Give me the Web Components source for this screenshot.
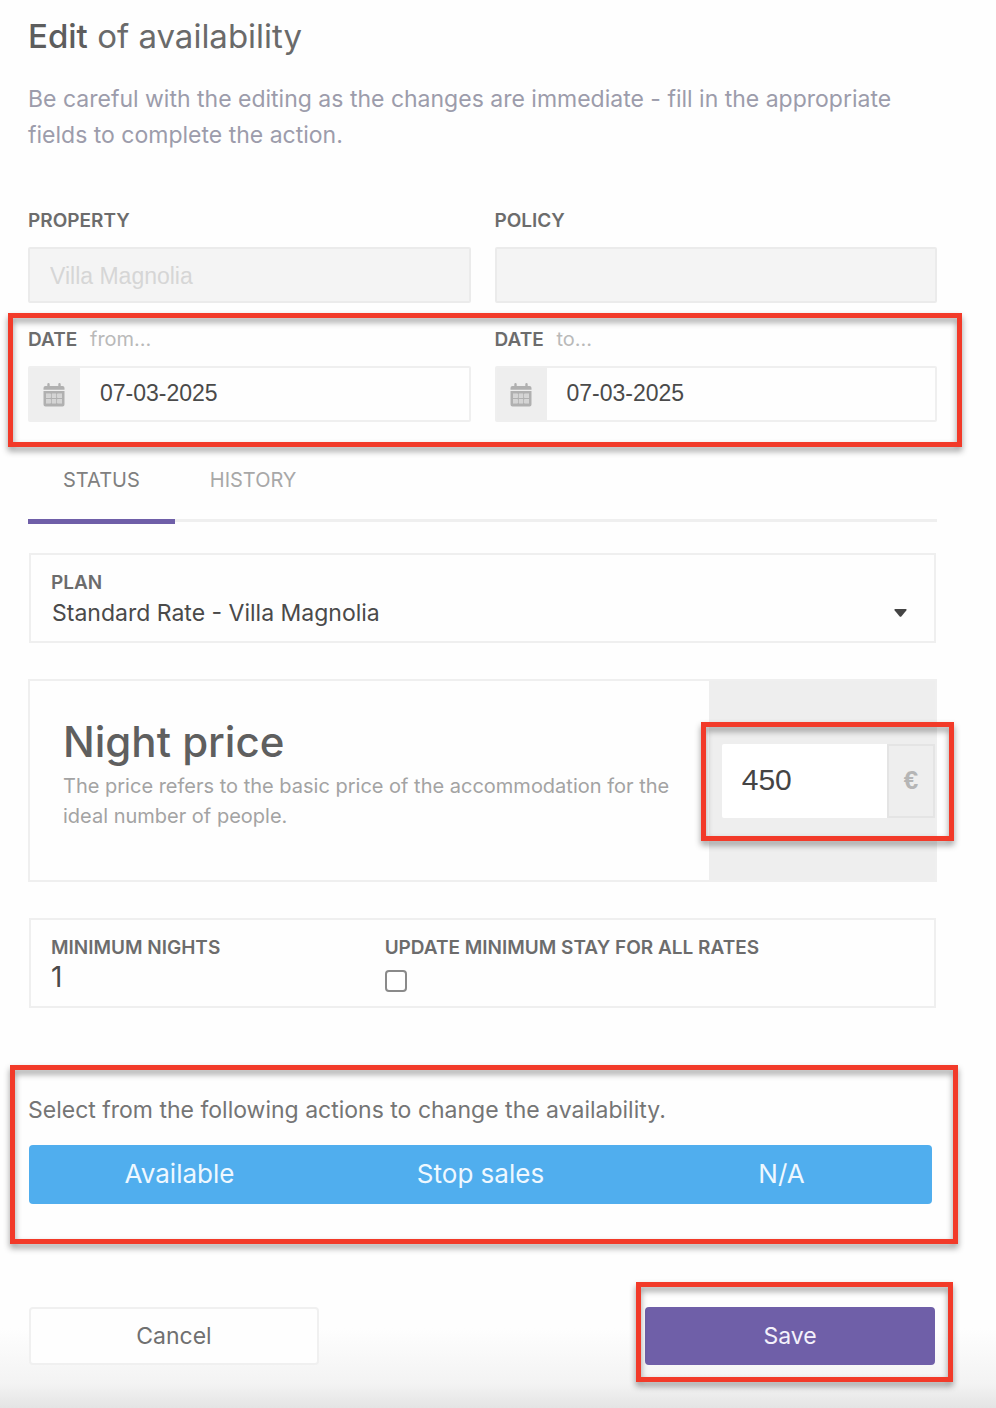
<!DOCTYPE html>
<html lang="en">
<head>
<meta charset="utf-8">
<meta name="viewport" content="width=device-width, initial-scale=1">
<title>Edit of availability</title>
<style>
  :root {
    --ink: #5f5f5f;
    --ink-strong: #4a4a4a;
    --line: #efefef;
    --fill: #eeeeee;
    --purple: #6f5fa8;
    --blue: #50aeee;
    --frame: #f23a29;
    --sans: Inter, "Liberation Sans", sans-serif;
    --arial: "Liberation Sans", Arial, sans-serif;
  }
  body { margin: 0; background: #fefefe; font-family: var(--sans); color: var(--ink); }
</style>
</head>
<body>
<availability-editor></availability-editor>

<script>
const define = (name, html, setup) => {
  const template = document.createElement('template');
  template.innerHTML = '<style>*{box-sizing:border-box}:host{display:block;box-sizing:border-box}</style>' + html;
  customElements.define(name, class extends HTMLElement {
    constructor() {
      super();
      this.attachShadow({ mode: 'open' }).append(template.content.cloneNode(true));
    }
    connectedCallback() {
      if (setup && !this.ready) setup(this, this.shadowRoot);
      this.ready = true;
    }
  });
};

const labelCss = 'label{display:block;font-size:19px;line-height:24px;font-weight:600;color:#6c6c6c}';

/* Red callout drawn over the slotted content */
define('callout-frame', `
<style>
  :host { position: relative; }
  .ring {
    position: absolute; pointer-events: none;
    top: var(--t, -20px); right: var(--r, -20px); bottom: var(--b, -20px); left: var(--l, -20px);
    border: 5px solid var(--frame);
    filter: drop-shadow(0 4px 3px rgba(0, 0, 0, .4));
  }
</style>
<slot></slot><div class="ring"></div>`);

define('text-field', `
<style>
  ${labelCss}
  input {
    display: block; width: 100%; height: 56px; margin-top: 14px; padding: 2px 20px 0;
    border: 2px solid #ebebeb; border-radius: 2px; background: #f4f4f4;
    font: 23px var(--arial); color: #d6d6d6; opacity: 1;
  }
</style>
<label for="f"></label><input id="f" type="text" disabled>`,
(host, root) => {
  root.querySelector('label').textContent = host.getAttribute('label');
  root.querySelector('input').value = host.getAttribute('value') || '';
});

define('date-field', `
<style>
  ${labelCss}
  label b { font-weight: 600; }
  label span { margin-left: 8px; font-size: 20px; font-weight: 400; color: #b9b9b9; }
  .box { display: flex; height: 56px; margin-top: 14px; border: 2px solid var(--line); border-radius: 2px; background: #fefefe; }
  .icon { flex: none; width: 50px; display: grid; place-items: center; padding: 2px 2px 0 0; background: var(--fill); }
  svg { display: block; }
  input { flex: 1; min-width: 0; border: 0; padding: 0 20px 2px; background: none; font: 23px var(--arial); color: var(--ink-strong); outline: 0; }
</style>
<label for="d"><b></b> <span></span></label>
<div class="box">
  <div class="icon">
    <svg width="22" height="24" viewBox="0 0 22 24" aria-hidden="true">
      <path fill="#b0b0b0" d="M5.500 0a1.200 1.200 0 0 1 1.200 1.200V3h8.600V1.200a1.200 1.200 0 0 1 2.400 0V3h1.800a2 2 0 0 1 2 2v1.800H.5V5a2 2 0 0 1 2-2h1.800V1.200A1.200 1.200 0 0 1 5.500 0z"/>
      <path fill="#b0b0b0" fill-rule="evenodd" d="M.5 8h21v13.500a2 2 0 0 1-2 2h-17a2 2 0 0 1-2-2zM3 10.700v4h4.600v-4zM8.900 10.700v4h4.200v-4zM14.400 10.700v4H19v-4zM3 16.200v4h4.600v-4zM8.900 16.200v4h4.200v-4zM14.400 16.200v4H19v-4z"/>
      <path fill="#d4d4d4" d="M3 10.700h4.600v4H3zM8.900 10.700h4.200v4H8.900zM14.400 10.700H19v4h-4.600zM3 16.200h4.600v4H3zM8.900 16.200h4.200v4H8.900zM14.400 16.200H19v4h-4.600z"/>
    </svg>
  </div>
  <input id="d" type="text">
</div>`,
(host, root) => {
  root.querySelector('b').textContent = host.getAttribute('label');
  root.querySelector('span').textContent = host.getAttribute('hint');
  root.querySelector('input').value = host.getAttribute('value');
});

define('tab-strip', `
<style>
  div { display: flex; border-bottom: 3px solid var(--line); }
  button {
    appearance: none; border: 0; border-bottom: 5px solid transparent; background: none;
    margin: 0 0 -5px; padding: 24px 35px 27px; font: 20px/24px var(--sans); color: #a8a8a8;
  }
  button[aria-selected="true"] { color: #808080; border-color: var(--purple); }
</style>
<div role="tablist">
  <button role="tab" aria-selected="true">STATUS</button>
  <button role="tab" aria-selected="false">HISTORY</button>
</div>`);

define('plan-select', `
<style>
  ${labelCss}
  :host { border: 2px solid var(--line); padding: 16px 20px 10px; }
  .pick { display: grid; align-items: center; }
  select, svg { grid-area: 1 / 1; }
  select { appearance: none; width: 100%; height: 36px; padding: 0 40px 0 1px; border: 0; background: none; font: 23px var(--sans); color: var(--ink-strong); }
  svg { justify-self: end; margin-right: 7px; pointer-events: none; }
</style>
<label for="p">PLAN</label>
<div class="pick">
  <select id="p"><option>Standard Rate - Villa Magnolia</option></select>
  <svg width="13" height="8" viewBox="0 0 13 8" aria-hidden="true"><path fill="#444" d="M1 0h11q1 .5.300 1.500L7.500 7.200q-1 1-2 0L.7 1.500Q0 .5 1 0z"/></svg>
</div>`);

define('price-card', `
<style>
  :host { display: grid; grid-template-columns: minmax(0, 3fr) minmax(0, 1fr); min-height: 203px; border: 2px solid var(--line); }
  .copy { padding: 36px 20px 36px 33px; }
  h2 { margin: 0; font-size: 42px; line-height: 50px; font-weight: 500; }
  p { margin: 4px 0 0; font-size: 20px; line-height: 30px; color: #a3a3a3; }
  .side { display: grid; grid-template-columns: minmax(0, 1fr); align-items: center; padding: 0 0 0 13px; background: var(--fill); }
  .box { display: flex; height: 74px; }
  input { flex: 1; width: 0; min-width: 0; border: 0; border-radius: 2px 0 0 2px; padding: 0 20px 2px; background: #fff; font: 30px var(--arial); color: #444; outline: 0; }
  .unit { flex: none; width: 48px; display: grid; place-items: center; border: 2px solid #e4e4e4; font: 700 26px var(--arial); color: #b5b5b5; }
</style>
<div class="copy">
  <h2 id="h">Night price</h2>
  <p>The price refers to the basic price of the accommodation for the ideal number of people.</p>
</div>
<div class="side">
  <callout-frame style="--t:-22px;--r:-19px;--b:-23px;--l:-21px">
    <div class="box"><input type="text" value="450" aria-labelledby="h"><span class="unit">€</span></div>
  </callout-frame>
</div>`);

define('stay-card', `
<style>
  ${labelCss}
  :host { display: grid; grid-template-columns: 3fr 5fr; column-gap: 4px; border: 2px solid var(--line); padding: 16px 0 10px 20px; }
  .num { display: block; width: 100%; height: 36px; border: 0; padding: 0 0 2px; background: none; font: 28px var(--sans); color: var(--ink-strong); outline: 0; }
  .tick { appearance: none; display: block; width: 22px; height: 22px; margin: 10px 0 0; border: 2px solid #8a8a8a; border-radius: 4px; background: #fff; }
  .tick:checked { background: var(--purple); }
</style>
<div><label for="n">MINIMUM NIGHTS</label><input class="num" id="n" type="text" value="1"></div>
<div><label for="u">UPDATE MINIMUM STAY FOR ALL RATES</label><input class="tick" id="u" type="checkbox"></div>`);

define('status-actions', `
<style>
  p { margin: 0 0 20px; font-size: 23px; line-height: 30px; color: #757575; }
  .bar { display: grid; grid-template-columns: repeat(3, 1fr); margin: 0 5px 0 1px; border-radius: 4px; overflow: hidden; background: var(--blue); }
  button { appearance: none; height: 59px; padding: 0 0 2px; border: 0; background: none; font: 26px var(--sans); color: #eef8ff; }
</style>
<p id="t">Select from the following actions to change the availability.</p>
<div class="bar" role="group" aria-labelledby="t">
  <button>Available</button><button>Stop sales</button><button>N/A</button>
</div>`);

define('action-button', `
<style>
  button { appearance: none; display: block; width: 100%; height: 58px; padding: 0; border: 2px solid #f0f0f0; border-radius: 4px; background: #fefefe; font: 23px var(--sans); color: #707070; }
  :host([primary]) button { border-color: var(--purple); background: var(--purple); color: #f4f1fb; }
</style>
<button><slot></slot></button>`);

define('availability-editor', `
<style>
  :host { min-height: 100vh; padding: 16px 59px 42px 28px; background: linear-gradient(to top, #e4e4e4, #f3f3f3 24px, #fefefe 80px); }
  h1 { margin: 0; font-size: 33px; line-height: 40px; font-weight: 400; color: #6a6a6a; }
  h1 b { font-weight: 500; color: #5d5d5d; }
  .intro { margin: 25px 0 56px; font-size: 23px; line-height: 36px; color: #9c9cab; }
  .row { display: grid; grid-template-columns: 1fr 1fr; column-gap: 24px; }
  callout-frame.dates { margin: 24px 0 22px; }
  plan-select { margin: 31px 1px 36px; }
  stay-card { margin: 36px 1px 87px; }
  .foot { display: flex; justify-content: space-between; margin: 103px 2px 0 1px; }
  .foot > * { width: 32%; }
</style>
<main>
  <h1><b>Edit</b> of availability</h1>
  <p class="intro">Be careful with the editing as the changes are immediate - fill in the appropriate fields to complete the action.</p>
  <div class="row">
    <text-field label="PROPERTY" value="Villa Magnolia"></text-field>
    <text-field label="POLICY"></text-field>
  </div>
  <callout-frame class="dates" style="--t:-14px;--r:-25px;--b:-25px;--l:-20px">
    <div class="row">
      <date-field label="DATE" hint="from..." value="07-03-2025"></date-field>
      <date-field label="DATE" hint="to..." value="07-03-2025"></date-field>
    </div>
  </callout-frame>
  <tab-strip></tab-strip>
  <plan-select></plan-select>
  <price-card></price-card>
  <stay-card></stay-card>
  <callout-frame style="--t:-30px;--r:-21px;--b:-40px;--l:-18px"><status-actions></status-actions></callout-frame>
  <div class="foot">
    <action-button>Cancel</action-button>
    <callout-frame style="--t:-25px;--r:-18px;--b:-17px;--l:-9px"><action-button primary>Save</action-button></callout-frame>
  </div>
</main>`);
</script>
</body>
</html>
